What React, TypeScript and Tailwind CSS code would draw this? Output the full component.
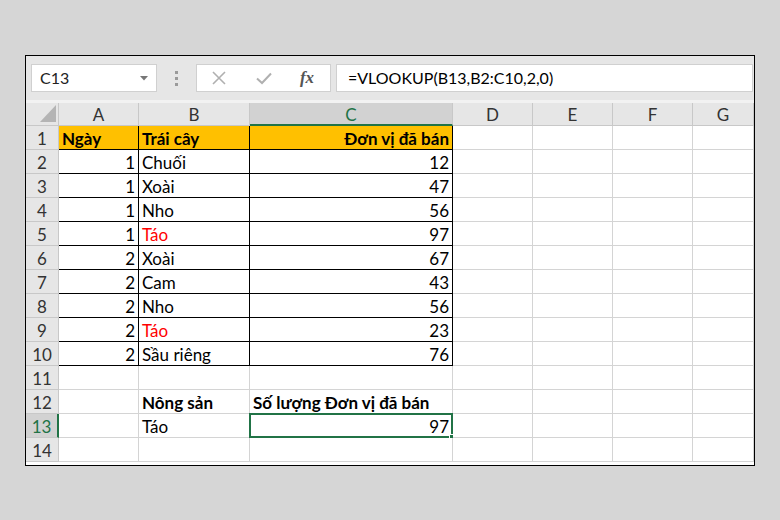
import React from "react";

const cols = [
  { key: "A", w: "w-[80px]" },
  { key: "B", w: "w-[111px]" },
  { key: "C", w: "w-[203px]" },
  { key: "D", w: "w-[80px]" },
  { key: "E", w: "w-[80px]" },
  { key: "F", w: "w-[80px]" },
  { key: "G", w: "flex-1" },
];

type Cell = { t: string; right?: boolean; bold?: boolean; red?: boolean };

const data: Record<number, Record<string, Cell>> = {
  1: {
    A: { t: "Ngày", bold: true },
    B: { t: "Trái cây", bold: true },
    C: { t: "Đơn vị đã bán", bold: true, right: true },
  },
  2: { A: { t: "1", right: true }, B: { t: "Chuối" }, C: { t: "12", right: true } },
  3: { A: { t: "1", right: true }, B: { t: "Xoài" }, C: { t: "47", right: true } },
  4: { A: { t: "1", right: true }, B: { t: "Nho" }, C: { t: "56", right: true } },
  5: { A: { t: "1", right: true }, B: { t: "Táo", red: true }, C: { t: "97", right: true } },
  6: { A: { t: "2", right: true }, B: { t: "Xoài" }, C: { t: "67", right: true } },
  7: { A: { t: "2", right: true }, B: { t: "Cam" }, C: { t: "43", right: true } },
  8: { A: { t: "2", right: true }, B: { t: "Nho" }, C: { t: "56", right: true } },
  9: { A: { t: "2", right: true }, B: { t: "Táo", red: true }, C: { t: "23", right: true } },
  10: { A: { t: "2", right: true }, B: { t: "Sầu riêng" }, C: { t: "76", right: true } },
  12: { B: { t: "Nông sản", bold: true }, C: { t: "Số lượng Đơn vị đã bán", bold: true } },
  13: { B: { t: "Táo" }, C: { t: "97", right: true } },
};

const rows = Array.from({ length: 14 }, (_, i) => i + 1);

function GridCell({ row, col, w }: { row: number; col: string; w: string }) {
  const inTable = row <= 10 && (col === "A" || col === "B" || col === "C");
  const cell = data[row]?.[col];
  const selected = row === 13 && col === "C";
  const border = inTable ? "border-black" : "border-[#d4d4d4]";
  const bg = row === 1 && inTable ? "bg-[#ffc000]" : "bg-white";
  return (
    <div
      className={`relative h-[24px] ${w} shrink-0 border-b border-r ${border} ${bg} flex items-center pt-[2px] px-[3px] ${
        cell?.right ? "justify-end" : "justify-start"
      }`}
    >
      {cell && (
        <span
          className={`whitespace-nowrap text-[17px] leading-none ${cell.bold ? "font-bold" : ""} ${
            cell.red ? "text-[#ff0000]" : "text-black"
          }`}
        >
          {cell.t}
        </span>
      )}
      {selected && (
        <>
          <div className="absolute left-[-1px] top-[-1px] right-[-1px] bottom-[-1px] border-2 border-[#217346]" />
          <div className="absolute right-[-3px] bottom-[-3px] w-[6px] h-[6px] bg-[#217346] border border-white" />
        </>
      )}
    </div>
  );
}

export default function App() {
  return (
    <div
      className="w-[780px] h-[520px] bg-[#d6d6d6] pt-[55px] pl-[25px]"
      style={{ fontFamily: "Lato, 'Open Sans', sans-serif" }}
    >
      <div className="w-[730px] h-[411px] border-[1.5px] border-black bg-white flex flex-col overflow-hidden">
        {/* formula bar */}
        <div className="h-[44px] bg-[#e6e6e6] flex items-center pl-[5px] pr-[1px] gap-0 shrink-0">
          <div className="w-[126px] h-[28px] bg-white border border-[#d0d0d0] flex items-center justify-between pl-[8px] pr-[8px]">
            <span className="text-[16px] text-[#222]">C13</span>
            <svg width="8" height="5" viewBox="0 0 8 5">
              <path d="M0 0 L8 0 L4 4.5 Z" fill="#777" />
            </svg>
          </div>
          <div className="w-[39px] flex flex-col items-center gap-[3px]">
            <div className="w-[3px] h-[3px] bg-[#9a9a9a]" />
            <div className="w-[3px] h-[3px] bg-[#9a9a9a]" />
            <div className="w-[3px] h-[3px] bg-[#9a9a9a]" />
          </div>
          <div className="w-[135px] h-[28px] bg-white border border-[#d0d0d0] flex items-center">
            <div className="w-[44px] flex justify-center">
              <svg width="14" height="14" viewBox="0 0 14 14">
                <path d="M1 1 L13 13 M13 1 L1 13" stroke="#b0b0b0" strokeWidth="1.6" />
              </svg>
            </div>
            <div className="w-[46px] flex justify-center">
              <svg width="16" height="13" viewBox="0 0 16 13">
                <path d="M1 6.5 L6 11 L15 1.5" stroke="#b0b0b0" strokeWidth="2" fill="none" />
              </svg>
            </div>
            <div className="w-[40px] flex justify-center">
              <span
                className="italic text-[17px] text-[#555] font-bold"
                style={{ fontFamily: "'Liberation Serif', serif" }}
              >
                fx
              </span>
            </div>
          </div>
          <div className="ml-[5px] flex-1 h-[28px] bg-white border border-[#d0d0d0] flex items-center pl-[11px]">
            <span className="text-[16px] text-black">=VLOOKUP(B13,B2:C10,2,0)</span>
          </div>
        </div>
        <div className="h-[3px] bg-[#f2f2f2] shrink-0" />
        {/* column headers */}
        <div className="flex h-[23px] shrink-0">
          <div className="relative w-[33px] shrink-0 bg-[#e6e6e6] border-r border-b border-[#c8c8c8]">
            <svg className="absolute right-[2px] bottom-[3px]" width="16" height="17" viewBox="0 0 16 17">
              <path d="M16 0 L16 17 L0 17 Z" fill="#b4b4b4" />
            </svg>
          </div>
          {cols.map((c) => (
            <div
              key={c.key}
              className={`${c.w} shrink-0 flex items-center justify-center pt-[2px] text-[17px] border-r ${
                c.key === "C"
                  ? "bg-[#d2d2d2] text-[#217346] border-b-2 border-b-[#217346] border-r-[#c8c8c8]"
                  : "bg-[#e6e6e6] text-[#333] border-b border-[#c8c8c8]"
              }`}
            >
              {c.key}
            </div>
          ))}
        </div>
        {/* rows */}
        {rows.map((r) => (
          <div key={r} className="flex shrink-0">
            <div
              className={`w-[33px] h-[24px] shrink-0 flex items-center justify-center pt-[2px] text-[17px] border-b border-b-[#c8c8c8] ${
                r === 13
                  ? "bg-[#d2d2d2] text-[#217346] border-r-2 border-r-[#217346]"
                  : "bg-[#e6e6e6] text-[#333] border-r border-r-[#c8c8c8]"
              }`}
            >
              {r}
            </div>
            {cols.map((c) => (
              <GridCell key={c.key} row={r} col={c.key} w={c.w} />
            ))}
          </div>
        ))}
      </div>
    </div>
  );
}
